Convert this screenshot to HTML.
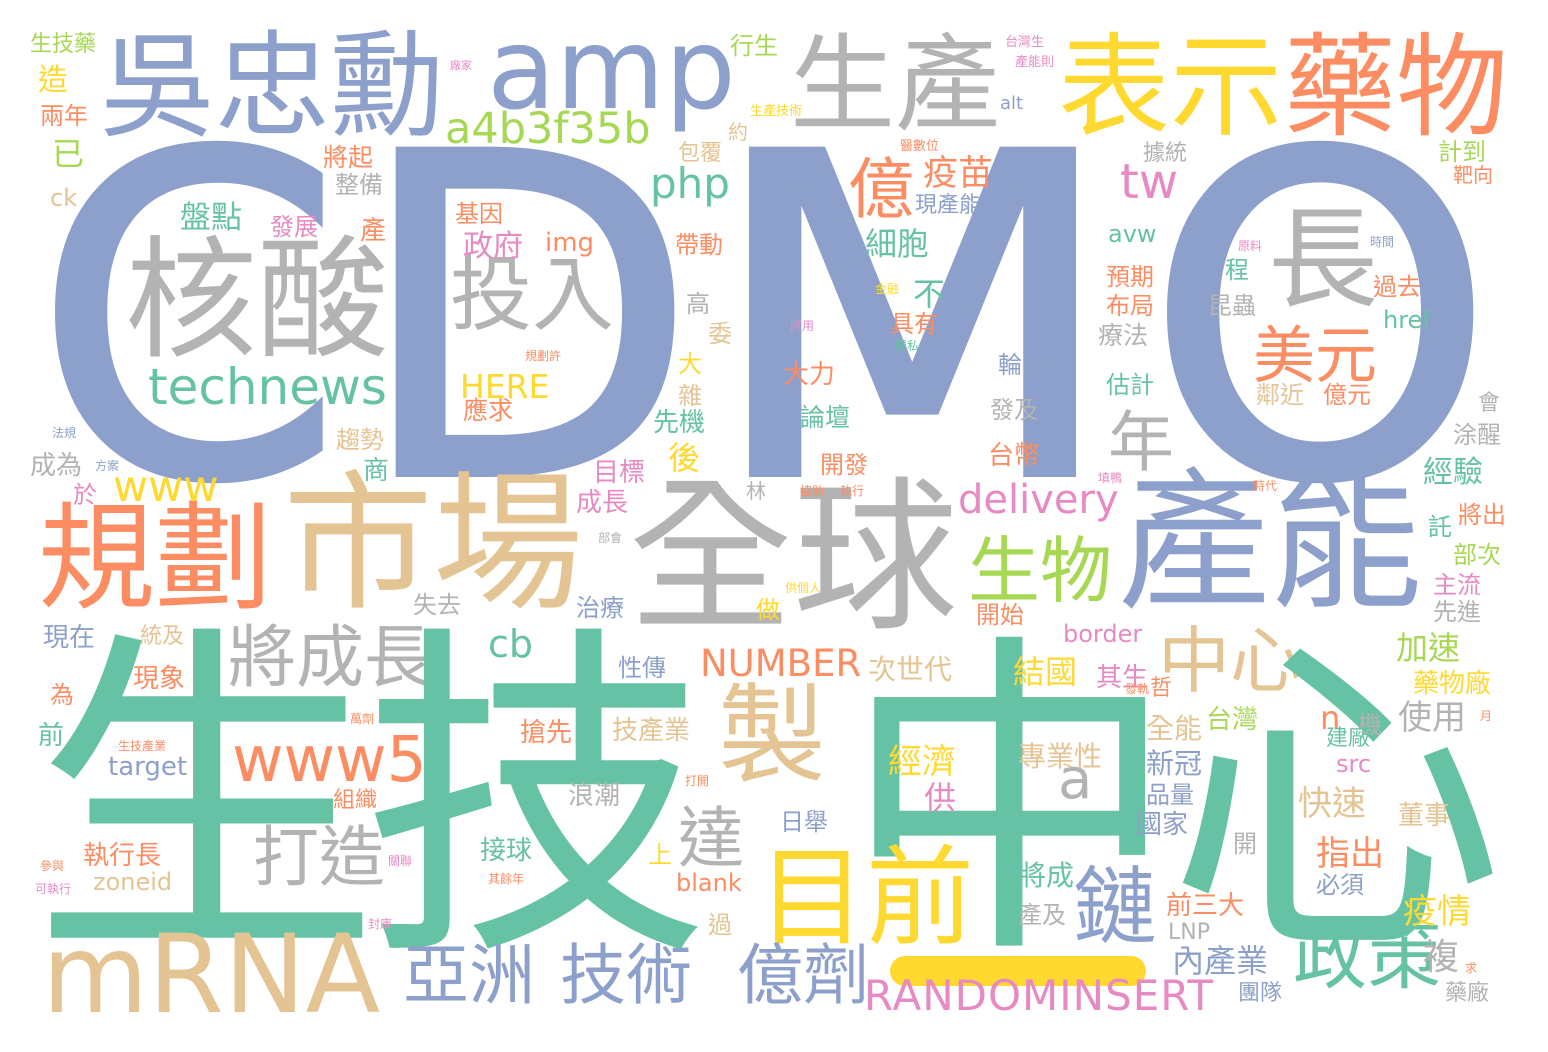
<!DOCTYPE html>
<html><head><meta charset="utf-8"><style>
html,body{margin:0;padding:0;background:#fff;}
#c{position:relative;width:1548px;height:1052px;overflow:hidden;background:#fff;}
.w{position:absolute;white-space:nowrap;line-height:1;font-family:"DejaVu Sans","Noto Sans CJK TC",sans-serif;}
.t{color:#66c2a5}.o{color:#fc8d62}.b{color:#8da0cb}.p{color:#e78ac3}.g{color:#a6d854}.y{color:#ffd92f}.n{color:#e5c494}.s{color:#b3b3b3}
.big{-webkit-text-stroke:6px #8da0cb;stroke-linejoin:round}
</style></head><body><div id="c">
<div class="w b big" style="left:33px;top:98px;font-size:445px">C</div>
<div class="w b big" style="left:355px;top:98px;font-size:445px">D</div>
<div class="w b big" style="left:705px;top:98px;font-size:445px;transform:scaleX(1.08);transform-origin:0 0">M</div>
<div class="w b big" style="left:1145px;top:98px;font-size:445px">O</div>
<div class="w b" style="left:100px;top:30px;font-size:115px">吳忠勳</div>
<div class="w b" style="left:487px;top:14px;font-size:112px">amp</div>
<div class="w s" style="left:790px;top:33px;font-size:105px">生產</div>
<div class="w y" style="left:1058px;top:32px;font-size:112px">表示</div>
<div class="w o" style="left:1284px;top:32px;font-size:112px">藥物</div>
<div class="w s" style="left:125px;top:235px;font-size:132px">核酸</div>
<div class="w s" style="left:450px;top:255px;font-size:82px">投入</div>
<div class="w s" style="left:1268px;top:205px;font-size:110px">長</div>
<div class="w t" style="left:148px;top:362px;font-size:50px">technews</div>
<div class="w g" style="left:445px;top:108px;font-size:43px">a4b3f35b</div>
<div class="w o" style="left:848px;top:157px;font-size:66px">億</div>
<div class="w o" style="left:923px;top:157px;font-size:35px">疫苗</div>
<div class="w p" style="left:1120px;top:158px;font-size:48px">tw</div>
<div class="w t" style="left:650px;top:163px;font-size:42px">php</div>
<div class="w o" style="left:1253px;top:325px;font-size:62px">美元</div>
<div class="w s" style="left:1108px;top:410px;font-size:66px">年</div>
<div class="w s" style="left:628px;top:476px;font-size:165px">全球</div>
<div class="w b" style="left:1118px;top:467px;font-size:152px">產能</div>
<div class="w n" style="left:283px;top:470px;font-size:150px">市場</div>
<div class="w o" style="left:38px;top:500px;font-size:117px">規劃</div>
<div class="w g" style="left:968px;top:535px;font-size:72px">生物</div>
<div class="w n" style="left:1158px;top:625px;font-size:72px">中心</div>
<div class="w n" style="left:718px;top:683px;font-size:108px">製</div>
<div class="w s" style="left:228px;top:625px;font-size:68px">將成長</div>
<div class="w o" style="left:232px;top:728px;font-size:63px">www5</div>
<div class="w y" style="left:113px;top:466px;font-size:43px">www</div>
<div class="w p" style="left:958px;top:480px;font-size:40px">delivery</div>
<div class="w t" style="left:488px;top:625px;font-size:38px">cb</div>
<div class="w o" style="left:700px;top:645px;font-size:37px">NUMBER</div>
<div class="w t" style="left:32px;top:628px;font-size:348px;letter-spacing:-18px">生技</div>
<div class="w t" style="left:842px;top:636px;font-size:336px;letter-spacing:-10px">中心</div>
<div style="position:absolute;left:890px;top:956px;width:256px;height:30px;border-radius:15px;background:#ffd92f"></div>
<div class="w y" style="left:758px;top:845px;font-size:108px">目前</div>
<div class="w n" style="left:42px;top:920px;font-size:109px">mRNA</div>
<div class="w s" style="left:253px;top:825px;font-size:66px">打造</div>
<div class="w s" style="left:678px;top:806px;font-size:66px">達</div>
<div class="w s" style="left:1058px;top:752px;font-size:56px">a</div>
<div class="w b" style="left:1073px;top:865px;font-size:84px">鏈</div>
<div class="w b" style="left:403px;top:943px;font-size:66px">亞洲</div>
<div class="w b" style="left:560px;top:943px;font-size:66px">技術</div>
<div class="w b" style="left:737px;top:943px;font-size:66px">億劑</div>
<div class="w p" style="left:864px;top:975px;font-size:42px;letter-spacing:1px">RANDOMINSERT</div>
<div class="w t" style="left:1293px;top:920px;font-size:74px">政策</div>
<div class="w b" style="left:1172px;top:945px;font-size:32px">內產業</div>
<div class="w s" style="left:1423px;top:940px;font-size:36px">複</div>
<div class="w s" style="left:1445px;top:983px;font-size:22px">藥廠</div>
<div class="w b" style="left:1238px;top:983px;font-size:22px">團隊</div>
<div class="w g" style="left:30px;top:34px;font-size:22px">生技藥</div>
<div class="w y" style="left:38px;top:66px;font-size:30px">造</div>
<div class="w o" style="left:40px;top:104px;font-size:24px">兩年</div>
<div class="w g" style="left:52px;top:138px;font-size:32px">已</div>
<div class="w n" style="left:50px;top:186px;font-size:24px">ck</div>
<div class="w g" style="left:730px;top:34px;font-size:24px">行生</div>
<div class="w n" style="left:678px;top:143px;font-size:22px">包覆</div>
<div class="w n" style="left:728px;top:122px;font-size:20px">約</div>
<div class="w o" style="left:323px;top:145px;font-size:25px">將起</div>
<div class="w s" style="left:335px;top:173px;font-size:24px">整備</div>
<div class="w t" style="left:180px;top:203px;font-size:31px">盤點</div>
<div class="w p" style="left:270px;top:215px;font-size:24px">發展</div>
<div class="w o" style="left:360px;top:218px;font-size:26px">產</div>
<div class="w o" style="left:455px;top:202px;font-size:24px">基因</div>
<div class="w p" style="left:463px;top:232px;font-size:30px">政府</div>
<div class="w o" style="left:545px;top:230px;font-size:26px">img</div>
<div class="w o" style="left:675px;top:233px;font-size:24px">帶動</div>
<div class="w t" style="left:865px;top:228px;font-size:32px">細胞</div>
<div class="w b" style="left:915px;top:195px;font-size:22px">現產能</div>
<div class="w t" style="left:1108px;top:222px;font-size:24px">avw</div>
<div class="w s" style="left:1143px;top:143px;font-size:22px">據統</div>
<div class="w g" style="left:1438px;top:140px;font-size:24px">計到</div>
<div class="w o" style="left:1453px;top:165px;font-size:20px">靶向</div>
<div class="w t" style="left:1225px;top:258px;font-size:24px">程</div>
<div class="w o" style="left:1106px;top:265px;font-size:24px">預期</div>
<div class="w o" style="left:1106px;top:294px;font-size:24px">布局</div>
<div class="w s" style="left:1208px;top:294px;font-size:24px">昆蟲</div>
<div class="w o" style="left:1373px;top:275px;font-size:24px">過去</div>
<div class="w s" style="left:1098px;top:323px;font-size:25px">療法</div>
<div class="w t" style="left:1383px;top:308px;font-size:24px">href</div>
<div class="w t" style="left:913px;top:278px;font-size:32px">不</div>
<div class="w o" style="left:890px;top:312px;font-size:24px">具有</div>
<div class="w b" style="left:998px;top:353px;font-size:24px">輪系</div>
<div class="w t" style="left:1106px;top:373px;font-size:24px">估計</div>
<div class="w n" style="left:1256px;top:383px;font-size:24px">鄰近</div>
<div class="w o" style="left:1323px;top:383px;font-size:24px">億元</div>
<div class="w o" style="left:783px;top:362px;font-size:26px">大力</div>
<div class="w t" style="left:800px;top:405px;font-size:25px">論壇</div>
<div class="w s" style="left:990px;top:398px;font-size:24px">發及</div>
<div class="w y" style="left:460px;top:370px;font-size:33px">HERE</div>
<div class="w o" style="left:463px;top:398px;font-size:25px">應求</div>
<div class="w t" style="left:653px;top:410px;font-size:26px">先機</div>
<div class="w y" style="left:668px;top:442px;font-size:32px">後</div>
<div class="w s" style="left:686px;top:292px;font-size:24px">高</div>
<div class="w n" style="left:708px;top:322px;font-size:24px">委</div>
<div class="w y" style="left:678px;top:352px;font-size:24px">大</div>
<div class="w n" style="left:678px;top:384px;font-size:24px">雜</div>
<div class="w n" style="left:336px;top:428px;font-size:24px">趨勢</div>
<div class="w s" style="left:30px;top:453px;font-size:26px">成為</div>
<div class="w t" style="left:363px;top:458px;font-size:26px">商</div>
<div class="w p" style="left:593px;top:460px;font-size:26px">目標</div>
<div class="w o" style="left:820px;top:453px;font-size:24px">開發</div>
<div class="w o" style="left:988px;top:443px;font-size:26px">台幣</div>
<div class="w s" style="left:1453px;top:423px;font-size:24px">涂醒</div>
<div class="w s" style="left:1478px;top:393px;font-size:22px">會</div>
<div class="w t" style="left:1423px;top:458px;font-size:30px">經驗</div>
<div class="w o" style="left:1458px;top:503px;font-size:24px">將出</div>
<div class="w t" style="left:1428px;top:515px;font-size:24px">託</div>
<div class="w g" style="left:1453px;top:543px;font-size:24px">部次</div>
<div class="w p" style="left:1433px;top:573px;font-size:24px">主流</div>
<div class="w s" style="left:1433px;top:600px;font-size:24px">先進</div>
<div class="w p" style="left:73px;top:483px;font-size:24px">於</div>
<div class="w p" style="left:576px;top:490px;font-size:26px">成長</div>
<div class="w s" style="left:746px;top:481px;font-size:20px">林</div>
<div class="w s" style="left:413px;top:593px;font-size:24px">失去</div>
<div class="w b" style="left:576px;top:596px;font-size:24px">治療</div>
<div class="w y" style="left:756px;top:598px;font-size:24px">做</div>
<div class="w o" style="left:976px;top:603px;font-size:24px">開始</div>
<div class="w p" style="left:1063px;top:622px;font-size:24px">border</div>
<div class="w b" style="left:43px;top:625px;font-size:26px">現在</div>
<div class="w n" style="left:140px;top:626px;font-size:22px">統及</div>
<div class="w o" style="left:50px;top:683px;font-size:24px">為</div>
<div class="w o" style="left:133px;top:666px;font-size:26px">現象</div>
<div class="w b" style="left:618px;top:656px;font-size:24px">性傳</div>
<div class="w n" style="left:868px;top:656px;font-size:28px">次世代</div>
<div class="w y" style="left:1013px;top:656px;font-size:32px">結國</div>
<div class="w p" style="left:1096px;top:665px;font-size:26px">其生</div>
<div class="w o" style="left:1150px;top:678px;font-size:22px">哲</div>
<div class="w g" style="left:1396px;top:632px;font-size:32px">加速</div>
<div class="w y" style="left:1413px;top:671px;font-size:26px">藥物廠</div>
<div class="w s" style="left:1398px;top:701px;font-size:34px">使用</div>
<div class="w t" style="left:38px;top:723px;font-size:26px">前</div>
<div class="w o" style="left:520px;top:720px;font-size:26px">搶先</div>
<div class="w n" style="left:612px;top:718px;font-size:26px">技產業</div>
<div class="w n" style="left:1146px;top:715px;font-size:28px">全能</div>
<div class="w g" style="left:1206px;top:707px;font-size:26px">台灣</div>
<div class="w o" style="left:1320px;top:702px;font-size:32px">n</div>
<div class="w s" style="left:1358px;top:713px;font-size:24px">機</div>
<div class="w t" style="left:1326px;top:728px;font-size:22px">建廠</div>
<div class="w b" style="left:108px;top:754px;font-size:26px">target</div>
<div class="w y" style="left:888px;top:745px;font-size:34px">經濟</div>
<div class="w p" style="left:924px;top:782px;font-size:32px">供</div>
<div class="w n" style="left:1018px;top:743px;font-size:28px">專業性</div>
<div class="w b" style="left:1146px;top:750px;font-size:28px">新冠</div>
<div class="w p" style="left:1336px;top:752px;font-size:24px">src</div>
<div class="w n" style="left:1298px;top:787px;font-size:34px">快速</div>
<div class="w n" style="left:1398px;top:803px;font-size:26px">董事</div>
<div class="w s" style="left:568px;top:783px;font-size:26px">浪潮</div>
<div class="w b" style="left:780px;top:810px;font-size:24px">日舉</div>
<div class="w b" style="left:1146px;top:783px;font-size:24px">品量</div>
<div class="w o" style="left:333px;top:790px;font-size:22px">組織</div>
<div class="w b" style="left:1136px;top:812px;font-size:26px">國家</div>
<div class="w t" style="left:480px;top:838px;font-size:26px">接球</div>
<div class="w o" style="left:83px;top:843px;font-size:26px">執行長</div>
<div class="w y" style="left:648px;top:843px;font-size:24px">上</div>
<div class="w o" style="left:1316px;top:837px;font-size:34px">指出</div>
<div class="w s" style="left:1233px;top:832px;font-size:24px">開</div>
<div class="w b" style="left:1316px;top:873px;font-size:24px">必須</div>
<div class="w n" style="left:93px;top:870px;font-size:24px">zoneid</div>
<div class="w o" style="left:676px;top:871px;font-size:24px">blank</div>
<div class="w t" style="left:1018px;top:862px;font-size:28px">將成</div>
<div class="w o" style="left:1166px;top:893px;font-size:26px">前三大</div>
<div class="w y" style="left:1403px;top:895px;font-size:34px">疫情</div>
<div class="w n" style="left:708px;top:913px;font-size:24px">過</div>
<div class="w s" style="left:1018px;top:903px;font-size:24px">產及</div>
<div class="w s" style="left:1168px;top:922px;font-size:22px">LNP</div>
<div class="w o" style="left:900px;top:140px;font-size:13px">醫數位</div>
<div class="w y" style="left:750px;top:105px;font-size:13px">生產技術</div>
<div class="w p" style="left:450px;top:60px;font-size:11px">廠家</div>
<div class="w p" style="left:1005px;top:36px;font-size:13px">台灣生</div>
<div class="w p" style="left:1015px;top:56px;font-size:13px">產能則</div>
<div class="w b" style="left:1000px;top:95px;font-size:18px">alt</div>
<div class="w b" style="left:52px;top:427px;font-size:12px">法規</div>
<div class="w b" style="left:95px;top:460px;font-size:12px">方案</div>
<div class="w o" style="left:525px;top:350px;font-size:12px">規劃許</div>
<div class="w p" style="left:790px;top:320px;font-size:12px">將用</div>
<div class="w y" style="left:875px;top:283px;font-size:12px">金融</div>
<div class="w t" style="left:895px;top:340px;font-size:12px">隱私</div>
<div class="w p" style="left:1238px;top:240px;font-size:12px">原料</div>
<div class="w b" style="left:1370px;top:236px;font-size:12px">時間</div>
<div class="w p" style="left:1098px;top:472px;font-size:12px">填鴨</div>
<div class="w o" style="left:1253px;top:480px;font-size:12px">時代</div>
<div class="w o" style="left:800px;top:485px;font-size:12px">協助</div>
<div class="w o" style="left:840px;top:485px;font-size:12px">執行</div>
<div class="w y" style="left:785px;top:582px;font-size:12px">供個人</div>
<div class="w s" style="left:598px;top:532px;font-size:12px">部會</div>
<div class="w o" style="left:1125px;top:683px;font-size:12px">發軌</div>
<div class="w o" style="left:1480px;top:710px;font-size:12px">月</div>
<div class="w o" style="left:350px;top:713px;font-size:12px">萬劑</div>
<div class="w o" style="left:118px;top:740px;font-size:12px">生技產業</div>
<div class="w o" style="left:685px;top:775px;font-size:12px">打開</div>
<div class="w p" style="left:388px;top:855px;font-size:12px">關聯</div>
<div class="w o" style="left:40px;top:860px;font-size:12px">參與</div>
<div class="w o" style="left:488px;top:873px;font-size:12px">其餘年</div>
<div class="w p" style="left:35px;top:883px;font-size:12px">可執行</div>
<div class="w p" style="left:368px;top:918px;font-size:12px">封庫</div>
<div class="w o" style="left:1465px;top:962px;font-size:12px">求</div>
</div></body></html>
